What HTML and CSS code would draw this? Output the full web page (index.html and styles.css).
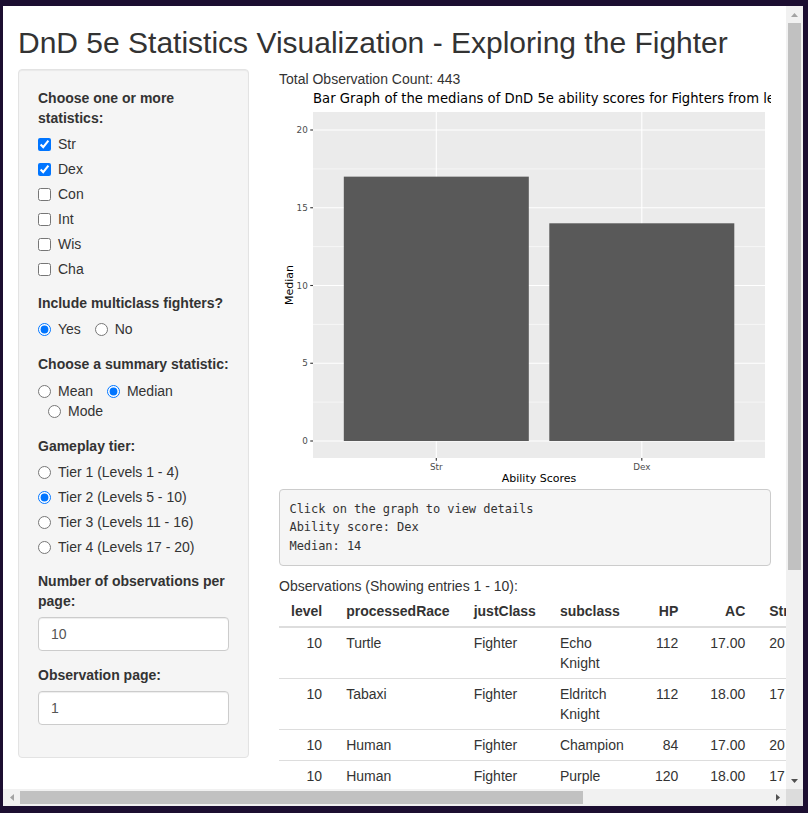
FILE: index.html
```html
<!DOCTYPE html>
<html lang="en">
<head>
<meta charset="utf-8">
<title>DnD 5e Statistics Visualization</title>
<link rel="stylesheet" href="styles.css">
</head>
<body>
<div class="window">
  <div class="viewport">
    <div class="page">
      <h2 class="title">DnD 5e Statistics Visualization - Exploring the Fighter</h2>
      <div class="layout">
        <div class="sidebar">
          <form class="well">
            <div class="form-group">
              <label class="control-label">Choose one or more statistics:</label>
              <div class="stack">
                <label class="opt"><input type="checkbox" checked><span>Str</span></label>
                <label class="opt"><input type="checkbox" checked><span>Dex</span></label>
                <label class="opt"><input type="checkbox"><span>Con</span></label>
                <label class="opt"><input type="checkbox"><span>Int</span></label>
                <label class="opt"><input type="checkbox"><span>Wis</span></label>
                <label class="opt"><input type="checkbox"><span>Cha</span></label>
              </div>
            </div>
            <div class="form-group">
              <label class="control-label">Include multiclass fighters?</label>
              <div class="inline">
                <label class="opt"><input type="radio" name="multi" checked><span>Yes</span></label>
                <label class="opt"><input type="radio" name="multi"><span>No</span></label>
              </div>
            </div>
            <div class="form-group">
              <label class="control-label">Choose a summary statistic:</label>
              <div class="inline">
                <label class="opt"><input type="radio" name="stat"><span>Mean</span></label>
                <label class="opt"><input type="radio" name="stat" checked><span>Median</span></label>
                <label class="opt"><input type="radio" name="stat"><span>Mode</span></label>
              </div>
            </div>
            <div class="form-group">
              <label class="control-label">Gameplay tier:</label>
              <div class="stack">
                <label class="opt"><input type="radio" name="tier"><span>Tier 1 (Levels 1 - 4)</span></label>
                <label class="opt"><input type="radio" name="tier" checked><span>Tier 2 (Levels 5 - 10)</span></label>
                <label class="opt"><input type="radio" name="tier"><span>Tier 3 (Levels 11 - 16)</span></label>
                <label class="opt"><input type="radio" name="tier"><span>Tier 4 (Levels 17 - 20)</span></label>
              </div>
            </div>
            <div class="form-group">
              <label class="control-label">Number of observations per page:</label>
              <input class="form-control" type="number" value="10">
            </div>
            <div class="form-group">
              <label class="control-label">Observation page:</label>
              <input class="form-control" type="number" value="1">
            </div>
          </form>
        </div>
        <div class="main">
          <div class="line">Total Observation Count: 443</div>
          <div class="plot">
            <svg class="plot-svg" width="492" height="400" viewBox="0 0 492 400">
              <rect width="492" height="400" fill="#ffffff"/>
              <text class="p-title" x="34" y="14">Bar Graph of the medians of DnD 5e ability scores for Fighters from levels 5 to 10</text>
              <rect x="34" y="23" width="452" height="346" fill="#ebebeb"/>
              <g stroke="#ffffff" stroke-width="0.55">
                <line x1="34" x2="486" y1="313.1" y2="313.1"/>
                <line x1="34" x2="486" y1="235.4" y2="235.4"/>
                <line x1="34" x2="486" y1="157.6" y2="157.6"/>
                <line x1="34" x2="486" y1="79.9" y2="79.9"/>
              </g>
              <g stroke="#ffffff" stroke-width="1.1">
                <line x1="34" x2="486" y1="352" y2="352"/>
                <line x1="34" x2="486" y1="274.25" y2="274.25"/>
                <line x1="34" x2="486" y1="196.5" y2="196.5"/>
                <line x1="34" x2="486" y1="118.75" y2="118.75"/>
                <line x1="34" x2="486" y1="41" y2="41"/>
                <line x1="157.3" x2="157.3" y1="23" y2="369"/>
                <line x1="362.8" x2="362.8" y1="23" y2="369"/>
              </g>
              <rect x="64.8" y="87.65" width="185" height="264.35" fill="#595959"/>
              <rect x="270.3" y="134.3" width="185" height="217.7" fill="#595959"/>
              <g stroke="#333333" stroke-width="1.1">
                <line x1="31.25" x2="34" y1="352" y2="352"/>
                <line x1="31.25" x2="34" y1="274.25" y2="274.25"/>
                <line x1="31.25" x2="34" y1="196.5" y2="196.5"/>
                <line x1="31.25" x2="34" y1="118.75" y2="118.75"/>
                <line x1="31.25" x2="34" y1="41" y2="41"/>
                <line x1="157.3" x2="157.3" y1="369" y2="371.75"/>
                <line x1="362.8" x2="362.8" y1="369" y2="371.75"/>
              </g>
              <g class="p-tick" text-anchor="end">
                <text x="28.8" y="355.2">0</text>
                <text x="28.8" y="277.4">5</text>
                <text x="28.8" y="199.7">10</text>
                <text x="28.8" y="121.9">15</text>
                <text x="28.8" y="44.2">20</text>
              </g>
              <g class="p-tick" text-anchor="middle">
                <text x="157.3" y="380.5">Str</text>
                <text x="362.8" y="380.5">Dex</text>
              </g>
              <text class="p-axis" x="260" y="393" text-anchor="middle">Ability Scores</text>
              <text class="p-axis" x="14" y="196" text-anchor="middle" transform="rotate(-90 14 196)">Median</text>
            </svg>
          </div>
          <pre class="verbatim">Click on the graph to view details
Ability score: Dex
Median: 14</pre>
          <div class="line">Observations (Showing entries 1 - 10):</div>
          <table class="obs-table">
            <thead>
              <tr>
                <th class="num">level</th>
                <th>processedRace</th>
                <th>justClass</th>
                <th class="w-sub">subclass</th>
                <th class="num">HP</th>
                <th class="num w-ac">AC</th>
                <th class="str">Str</th>
              </tr>
            </thead>
            <tbody>
              <tr><td class="num">10</td><td>Turtle</td><td>Fighter</td><td>Echo Knight</td><td class="num">112</td><td class="num">17.00</td><td class="str">20</td></tr>
              <tr><td class="num">10</td><td>Tabaxi</td><td>Fighter</td><td>Eldritch Knight</td><td class="num">112</td><td class="num">18.00</td><td class="str">17</td></tr>
              <tr><td class="num">10</td><td>Human</td><td>Fighter</td><td>Champion</td><td class="num">84</td><td class="num">17.00</td><td class="str">20</td></tr>
              <tr><td class="num">10</td><td>Human</td><td>Fighter</td><td>Purple Dragon Knight</td><td class="num">120</td><td class="num">18.00</td><td class="str">17</td></tr>
            </tbody>
          </table>
        </div>
      </div>
    </div>
  </div>
  <div class="vbar">
    <div class="sb-btn"><svg width="7" height="4" viewBox="0 0 7 4"><polygon class="arrow-off" points="0,4 3.5,0 7,4"/></svg></div>
    <div class="sb-track"><div class="vthumb"></div></div>
    <div class="sb-btn"><svg width="7" height="4" viewBox="0 0 7 4"><polygon class="arrow-on" points="0,0 7,0 3.5,4"/></svg></div>
  </div>
  <div class="hbar">
    <div class="sb-btn"><svg width="4" height="7" viewBox="0 0 4 7"><polygon class="arrow-off" points="4,0 4,7 0,3.5"/></svg></div>
    <div class="sb-track"><div class="hthumb"></div></div>
    <div class="sb-btn"><svg width="4" height="7" viewBox="0 0 4 7"><polygon class="arrow-on" points="0,0 4,3.5 0,7"/></svg></div>
  </div>
  <div class="corner"></div>
</div>
</body>
</html>
```
FILE: styles.css
```css
* { box-sizing: border-box; }
html { background: #1c0e31; }
body {
  margin: 0;
  padding: 6px 5px 7px 3px;
  background: #1c0e31;
  font-family: "Liberation Sans", Arial, Helvetica, sans-serif;
}
.window {
  display: grid;
  grid-template-columns: 783px 17px;
  grid-template-rows: 783px 17px;
  width: 800px;
  height: 800px;
}
.viewport {
  overflow: hidden;
  background: #ffffff;
  color: #333333;
  font-size: 14px;
  line-height: 1.42857;
}
.page { padding: 0 15px; }
.title {
  margin: 20px 0 10px;
  font-size: 30px;
  font-weight: 500;
  line-height: 1.1;
  white-space: nowrap;
}
.layout {
  display: grid;
  grid-template-columns: 231px 492px;
  column-gap: 30px;
  align-items: start;
}
.well {
  margin: 0;
  background: #f5f5f5;
  border: 1px solid #e3e3e3;
  border-radius: 4px;
  box-shadow: inset 0 1px 1px rgba(0, 0, 0, 0.05);
  padding: 19px 19px 17px;
}
.form-group { margin-bottom: 15px; }
.control-label {
  display: block;
  font-weight: 700;
  margin-bottom: 5px;
}
.stack {
  display: flex;
  flex-direction: column;
  row-gap: 5px;
}
.opt {
  display: flex;
  align-items: flex-start;
  font-weight: 400;
  line-height: 20px;
}
.opt input {
  margin: 4px 7px 0 0;
  width: 13px;
  height: 13px;
  flex: none;
}
.inline { padding-bottom: 1px; }
.inline .opt {
  display: inline-flex;
  vertical-align: middle;
}
.inline .opt + .opt { margin-left: 10px; }
.form-control {
  display: block;
  width: 100%;
  height: 34px;
  padding: 6px 12px;
  font-family: inherit;
  font-size: 14px;
  line-height: 1.42857;
  color: #555555;
  background: #ffffff;
  border: 1px solid #cccccc;
  border-radius: 4px;
  box-shadow: inset 0 1px 1px rgba(0, 0, 0, 0.075);
  -moz-appearance: textfield;
}
.form-control::-webkit-inner-spin-button,
.form-control::-webkit-outer-spin-button { -webkit-appearance: none; margin: 0; }
.main { min-width: 0; }
.line { line-height: 20px; }
.plot {
  width: 492px;
  height: 400px;
  overflow: hidden;
}
.plot-svg { display: block; }
.p-title { font-family: "DejaVu Sans", sans-serif; font-size: 13.2px; fill: #000000; }
.p-tick { font-family: "DejaVu Sans", sans-serif; font-size: 8.8px; fill: #4d4d4d; }
.p-axis { font-family: "DejaVu Sans", sans-serif; font-size: 11px; fill: #000000; }
.verbatim {
  margin: 0 0 10px;
  padding: 9.5px;
  font-family: "DejaVu Sans Mono", "Liberation Mono", monospace;
  font-size: 12px;
  letter-spacing: -0.05px;
  line-height: 18.57px;
  color: #333333;
  background: #f5f5f5;
  border: 1px solid #cccccc;
  border-radius: 4px;
  white-space: pre;
}
.obs-table {
  border-collapse: collapse;
  border-spacing: 0;
  width: auto;
}
.obs-table th,
.obs-table td {
  padding: 5px 12px;
  line-height: 20px;
  text-align: left;
}
.obs-table th {
  font-weight: 700;
  vertical-align: bottom;
  border-bottom: 2px solid #dddddd;
  white-space: nowrap;
}
.obs-table td {
  vertical-align: top;
  border-top: 1px solid #dddddd;
}
.obs-table .num { text-align: right; }
.obs-table .str { text-align: left; }
.obs-table .w-sub::after,
.obs-table .w-ac::after {
  content: "";
  display: block;
  height: 0;
}
.obs-table .w-sub::after { width: 71px; }
.obs-table .w-ac::after { width: 43px; }
.vbar {
  display: grid;
  grid-template-rows: 17px 1fr 17px;
  background: #f1f1f1;
}
.hbar {
  display: grid;
  grid-template-columns: 17px 1fr 17px;
  background: #f1f1f1;
}
.sb-btn {
  display: flex;
  align-items: center;
  justify-content: center;
}
.sb-btn svg { display: block; }
.arrow-off { fill: #a3a3a3; }
.arrow-on { fill: #505050; }
.sb-track { overflow: hidden; }
.vthumb {
  margin: 0 2px;
  height: 547px;
  background: #c1c1c1;
}
.hthumb {
  margin: 2px 0;
  width: 563px;
  height: 13px;
  background: #c1c1c1;
}
.corner { background: #dcdcdc; }
```
